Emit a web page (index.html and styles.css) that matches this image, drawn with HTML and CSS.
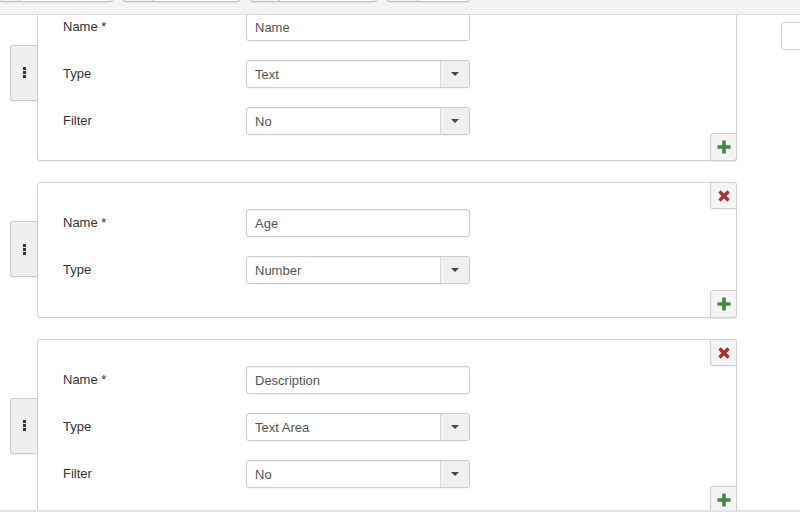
FILE: index.html
```html
<!DOCTYPE html>
<html>
<head>
<meta charset="utf-8">
<link rel="stylesheet" href="styles.css">
</head>
<body>
<div class="toolbar">
  <div class="bgroup"><span class="b b-icon w20"></span><span class="b w93"></span></div>
  <div class="bgroup"><span class="b b-icon w29"></span><span class="b w87"></span></div>
  <div class="bgroup"><span class="b b-icon w29"></span><span class="b w97"></span></div>
  <div class="bgroup"><span class="b b-icon w30"></span><span class="b w52"></span></div>
</div>
<div class="main">
  <div class="list">
    <div class="item">
      <div class="handle"><span class="dots"><i></i><i></i><i></i></span></div>
      <div class="card card-filter">
        <div class="card-head"><button class="btn btn-remove"><svg width="14" height="14" viewBox="0 0 14 14"><path d="M2.5 2.5 L11.5 11.5 M11.5 2.5 L2.5 11.5" stroke="#b52b27" stroke-width="3.2" stroke-linecap="butt"/></svg></button></div>
        <div class="rows">
          <div class="row"><label class="lbl">Name *</label><div class="input">Name</div></div>
          <div class="row"><label class="lbl">Type</label><div class="select"><span class="val">Text</span><span class="caret"></span></div></div>
          <div class="row"><label class="lbl">Filter</label><div class="select"><span class="val">No</span><span class="caret"></span></div></div>
        </div>
        <div class="card-foot"><button class="btn btn-add"><svg width="14" height="14" viewBox="0 0 14 14"><path d="M7 0.5 V13.5 M0.5 7 H13.5" stroke="#3d8b3d" stroke-width="3.6"/></svg></button></div>
      </div>
    </div>
    <div class="item">
      <div class="handle"><span class="dots"><i></i><i></i><i></i></span></div>
      <div class="card">
        <div class="card-head"><button class="btn btn-remove"><svg width="14" height="14" viewBox="0 0 14 14"><path d="M2.5 2.5 L11.5 11.5 M11.5 2.5 L2.5 11.5" stroke="#b52b27" stroke-width="3.2"/></svg></button></div>
        <div class="rows">
          <div class="row"><label class="lbl">Name *</label><div class="input">Age</div></div>
          <div class="row"><label class="lbl">Type</label><div class="select"><span class="val">Number</span><span class="caret"></span></div></div>
        </div>
        <div class="card-foot"><button class="btn btn-add"><svg width="14" height="14" viewBox="0 0 14 14"><path d="M7 0.5 V13.5 M0.5 7 H13.5" stroke="#3d8b3d" stroke-width="3.6"/></svg></button></div>
      </div>
    </div>
    <div class="item">
      <div class="handle"><span class="dots"><i></i><i></i><i></i></span></div>
      <div class="card card-filter">
        <div class="card-head"><button class="btn btn-remove"><svg width="14" height="14" viewBox="0 0 14 14"><path d="M2.5 2.5 L11.5 11.5 M11.5 2.5 L2.5 11.5" stroke="#b52b27" stroke-width="3.2"/></svg></button></div>
        <div class="rows">
          <div class="row"><label class="lbl">Name *</label><div class="input">Description</div></div>
          <div class="row"><label class="lbl">Type</label><div class="select"><span class="val">Text Area</span><span class="caret"></span></div></div>
          <div class="row"><label class="lbl">Filter</label><div class="select"><span class="val">No</span><span class="caret"></span></div></div>
        </div>
        <div class="card-foot"><button class="btn btn-add"><svg width="14" height="14" viewBox="0 0 14 14"><path d="M7 0.5 V13.5 M0.5 7 H13.5" stroke="#3d8b3d" stroke-width="3.6"/></svg></button></div>
      </div>
    </div>
  </div>
  <div class="side">
    <div class="side-box"></div>
  </div>
</div>
<div class="bottom-bar"></div>
</body>
</html>
```

FILE: styles.css
```css
html, body {
  margin: 0;
  padding: 0;
}
body {
  width: 800px;
  height: 512px;
  overflow: hidden;
  background: #fff;
  font-family: "Liberation Sans", Arial, sans-serif;
  font-size: 13px;
  color: #333;
  display: flex;
  flex-direction: column;
}
.toolbar {
  height: 14px;
  flex: none;
  background: #f3f3f3;
  border-bottom: 1px solid #dcdcdc;
  display: flex;
  align-items: flex-end;
  gap: 10px;
  overflow: hidden;
}
.toolbar .bgroup {
  display: flex;
  margin-bottom: 12px;
  flex: none;
}
.toolbar .bgroup:first-child { margin-left: -1px; }
.toolbar .b {
  display: block;
  height: 28px;
  background: #fafafa;
  border: 1px solid #c4c4c4;
  box-shadow: 0 1px 1px rgba(0,0,0,0.08);
}
.toolbar .b-icon {
  border-radius: 3px 0 0 3px;
  background: #f0f0f0;
}
.toolbar .b + .b {
  border-left: none;
  border-radius: 0 3px 3px 0;
}
.w20 { width: 19px; }
.w29 { width: 28px; }
.w30 { width: 29px; }
.w93 { width: 92px; }
.w87 { width: 86px; }
.w97 { width: 96px; }
.w52 { width: 51px; }

.main {
  flex: 1;
  display: flex;
  overflow: hidden;
  min-height: 0;
}
.list {
  margin-top: -29px;
  padding-left: 10px;
  width: 727px;
  flex: none;
  display: flex;
  flex-direction: column;
  gap: 21px;
}
.item {
  display: flex;
  align-items: center;
}
.handle {
  width: 26px;
  height: 54px;
  flex: none;
  background: #efefef;
  border: 1px solid #cdcdcd;
  border-right: none;
  border-radius: 3px 0 0 3px;
  box-shadow: 0 1px 1px rgba(0,0,0,0.06);
  display: flex;
  align-items: center;
  justify-content: center;
  margin-top: -2px;
}
.dots {
  display: flex;
  flex-direction: column;
  gap: 1px;
  margin-left: 1px;
}
.dots i {
  display: block;
  width: 3px;
  height: 3px;
  background: #333;
}
.card {
  width: 698px;
  flex: none;
  border: 1px solid #d2d2d2;
  border-radius: 3px;
  background: #fff;
  box-shadow: 0 1px 1px rgba(0,0,0,0.05);
}
.card-head, .card-foot {
  display: flex;
  justify-content: flex-end;
}
.card-foot { margin-top: 6px; }
.card-filter .card-foot { margin-top: -2px; }
.btn {
  width: 27px;
  height: 27px;
  padding: 0;
  border: 1px solid #cfcfcf;
  background: #f4f4f4;
  display: flex;
  align-items: center;
  justify-content: center;
  box-shadow: 0 1px 1px rgba(0,0,0,0.06);
}
.btn-remove {
  margin: -1px -1px 0 0;
  border-radius: 0 3px 0 3px;
}
.btn-add {
  margin: 0 -1px -1px 0;
  border-radius: 3px 0 3px 0;
  height: 28px;
}
.rows {
  display: flex;
  flex-direction: column;
  gap: 19px;
  padding-left: 25px;
}
.row {
  display: flex;
  align-items: center;
  height: 28px;
}
.lbl {
  width: 183px;
  flex: none;
  color: #333;
  margin-top: -1px;
}
.input, .select {
  width: 222px;
  height: 26px;
  border: 1px solid #cccccc;
  border-radius: 3px;
  background: #fff;
  box-shadow: inset 0 1px 1px rgba(0,0,0,0.06), 0 1px 1px rgba(0,0,0,0.05);
  color: #555;
  display: flex;
  align-items: center;
}
.input {
  padding-left: 8px;
  width: 214px;
}
.select .val {
  flex: 1;
  padding-left: 8px;
}
.caret {
  width: 28px;
  height: 26px;
  flex: none;
  border-left: 1px solid #d6d6d6;
  background: #f0f0f0;
  border-radius: 0 3px 3px 0;
  position: relative;
}
.caret::after {
  content: "";
  position: absolute;
  left: 10px;
  top: 11px;
  border-left: 4px solid transparent;
  border-right: 4px solid transparent;
  border-top: 4px solid #444;
}
.side {
  margin-left: 44px;
  padding-top: 7px;
  flex: 1;
}
.side-box {
  width: 30px;
  height: 26px;
  border: 1px solid #cfcfcf;
  border-radius: 3px;
  background: #fff;
}
.bottom-bar {
  height: 2px;
  flex: none;
  background: #e2e2e2;
}
```
